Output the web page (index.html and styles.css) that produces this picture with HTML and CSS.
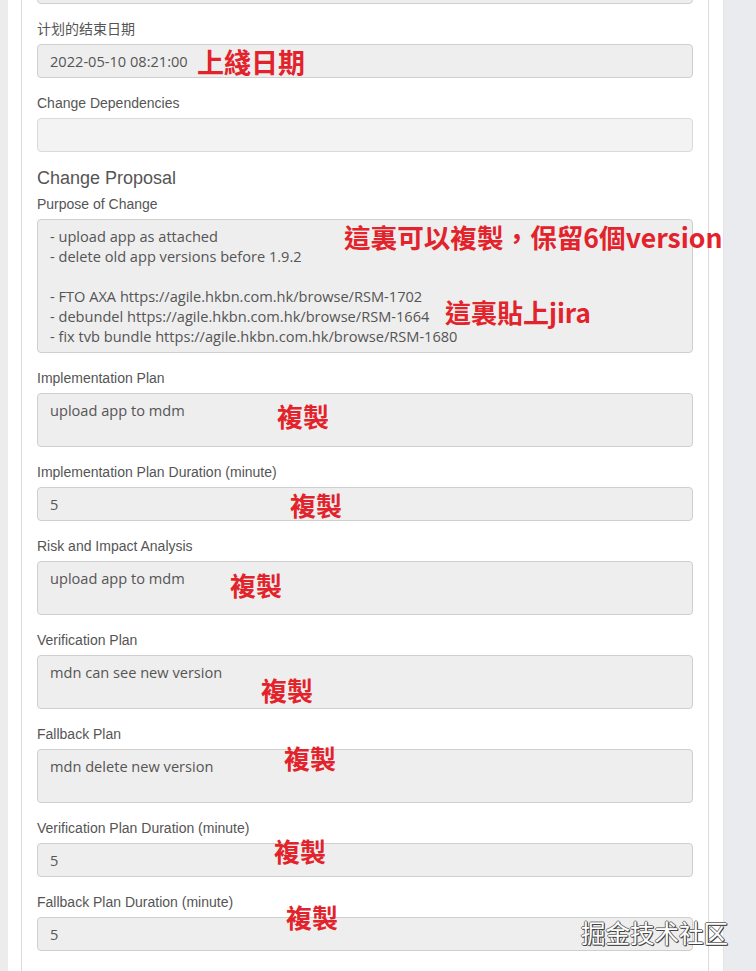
FILE: index.html
```html
<!DOCTYPE html>
<html>
<head>
<meta charset="utf-8">
<link rel="stylesheet" href="styles.css">
</head>
<body>
<div class="page">
  <div class="panel">
    <div class="inner">
      <div class="form-group"><div class="control clip"></div></div>
      <div class="form-group">
        <div class="label">计划的结束日期</div>
        <div class="control">2022-05-10 08:21:00</div>
      </div>
      <div class="form-group">
        <div class="label">Change Dependencies</div>
        <div class="control light"></div>
      </div>
      <h3 class="section">Change Proposal</h3>
      <div class="form-group">
        <div class="label">Purpose of Change</div>
        <div class="control area">- upload app as attached
- delete old app versions before 1.9.2

- FTO AXA https://agile.hkbn.com.hk/browse/RSM-1702
- debundel https://agile.hkbn.com.hk/browse/RSM-1664
- fix tvb bundle https://agile.hkbn.com.hk/browse/RSM-1680</div>
      </div>
      <div class="form-group">
        <div class="label">Implementation Plan</div>
        <div class="control area two">upload app to mdm</div>
      </div>
      <div class="form-group">
        <div class="label">Implementation Plan Duration (minute)</div>
        <div class="control">5</div>
      </div>
      <div class="form-group">
        <div class="label">Risk and Impact Analysis</div>
        <div class="control area two">upload app to mdm</div>
      </div>
      <div class="form-group">
        <div class="label">Verification Plan</div>
        <div class="control area two">mdn can see new version</div>
      </div>
      <div class="form-group">
        <div class="label">Fallback Plan</div>
        <div class="control area two">mdn delete new version</div>
      </div>
      <div class="form-group">
        <div class="label">Verification Plan Duration (minute)</div>
        <div class="control">5</div>
      </div>
      <div class="form-group">
        <div class="label">Fallback Plan Duration (minute)</div>
        <div class="control">5</div>
      </div>
    </div>
  </div>
  <div class="side"></div>

  <div class="note n1">上綫日期</div>
  <div class="note n2">這裏可以複製，保留6個version</div>
  <div class="note n3">這裏貼上jira</div>
  <div class="note n4">複製</div>
  <div class="note n5">複製</div>
  <div class="note n6">複製</div>
  <div class="note n7">複製</div>
  <div class="note n8">複製</div>
  <div class="note n9">複製</div>
  <div class="note n10">複製</div>
  <div class="watermark">掘金技术社区</div>
</div>
</body>
</html>
```
FILE: styles.css
```css
html, body {
  margin: 0;
  padding: 0;
  height: 100%;
  overflow: hidden;
}
body {
  background: #ececec;
  font-family: "Liberation Sans", Arial, "Noto Sans CJK SC", sans-serif;
}
.page {
  position: relative;
  display: flex;
  height: 971px;
  overflow: hidden;
}
.panel {
  margin-left: 8px;
  width: 715px;
  background: #fff;
  padding: 0 14px 0 13px;
  box-sizing: border-box;
}
.inner {
  display: flow-root;
  height: 100%;
  box-sizing: border-box;
  border-left: 1px solid #dcdcdc;
  border-right: 1px solid #dcdcdc;
  padding: 0 15px;
}
.side {
  flex: 1;
  background: #e9ebee;
  border-left: 1px solid #e2e4e6;
}
.form-group {
  margin-bottom: 15px;
}
.form-group:first-child {
  margin-top: -30px;
}
.label {
  font-size: 14px;
  line-height: 20px;
  color: #555;
  margin-bottom: 5px;
  font-family: "Liberation Sans", Arial, "Noto Sans CJK SC", sans-serif;
}
.control {
  height: 34px;
  box-sizing: border-box;
  border: 1px solid #cfcfcf;
  border-radius: 4px;
  background: #eeeeee;
  padding: 6px 12px;
  font-family: "Open Sans", "Noto Sans", sans-serif;
  font-size: 14.6px;
  line-height: 20px;
  color: #555;
  white-space: pre;
}
.control.light {
  background: #f3f3f3;
  border-color: #dadada;
}
.control.area {
  height: auto;
  min-height: 134px;
}
.control.area.two {
  min-height: 54px;
}
.section {
  margin: 0 0 6px;
  padding-top: 1px;
  font-size: 18px;
  line-height: 20px;
  font-weight: normal;
  color: #555;
  font-family: "Liberation Sans", Arial, sans-serif;
}
.note {
  position: absolute;
  font-family: "Noto Sans CJK TC", "Noto Sans CJK SC", sans-serif;
  font-weight: 700;
  font-size: 26px;
  line-height: 26px;
  color: #e3232b;
  white-space: nowrap;
}
.n1 { left: 197px; top: 48px; font-size: 27px; line-height: 27px; }
.n2 { left: 344px; top: 224px; font-size: 26.6px; }
.n3 { left: 445px; top: 299px; }
.n4 { left: 277px; top: 403px; }
.n5 { left: 290px; top: 492px; }
.n6 { left: 230px; top: 572px; }
.n7 { left: 261px; top: 677px; }
.n8 { left: 284px; top: 745px; }
.n9 { left: 274px; top: 838px; }
.n10 { left: 286px; top: 904px; }
.watermark {
  position: absolute;
  left: 581px;
  top: 918px;
  font-family: "Noto Sans CJK SC", sans-serif;
  font-size: 24.5px;
  line-height: 30px;
  color: #fff;
  text-shadow: 1px 1px 0 #444, -1px 0 0 #777, 0 -1px 0 #777, 1px 0 0 #555, 0 1px 0 #555;
  white-space: nowrap;
}
```
